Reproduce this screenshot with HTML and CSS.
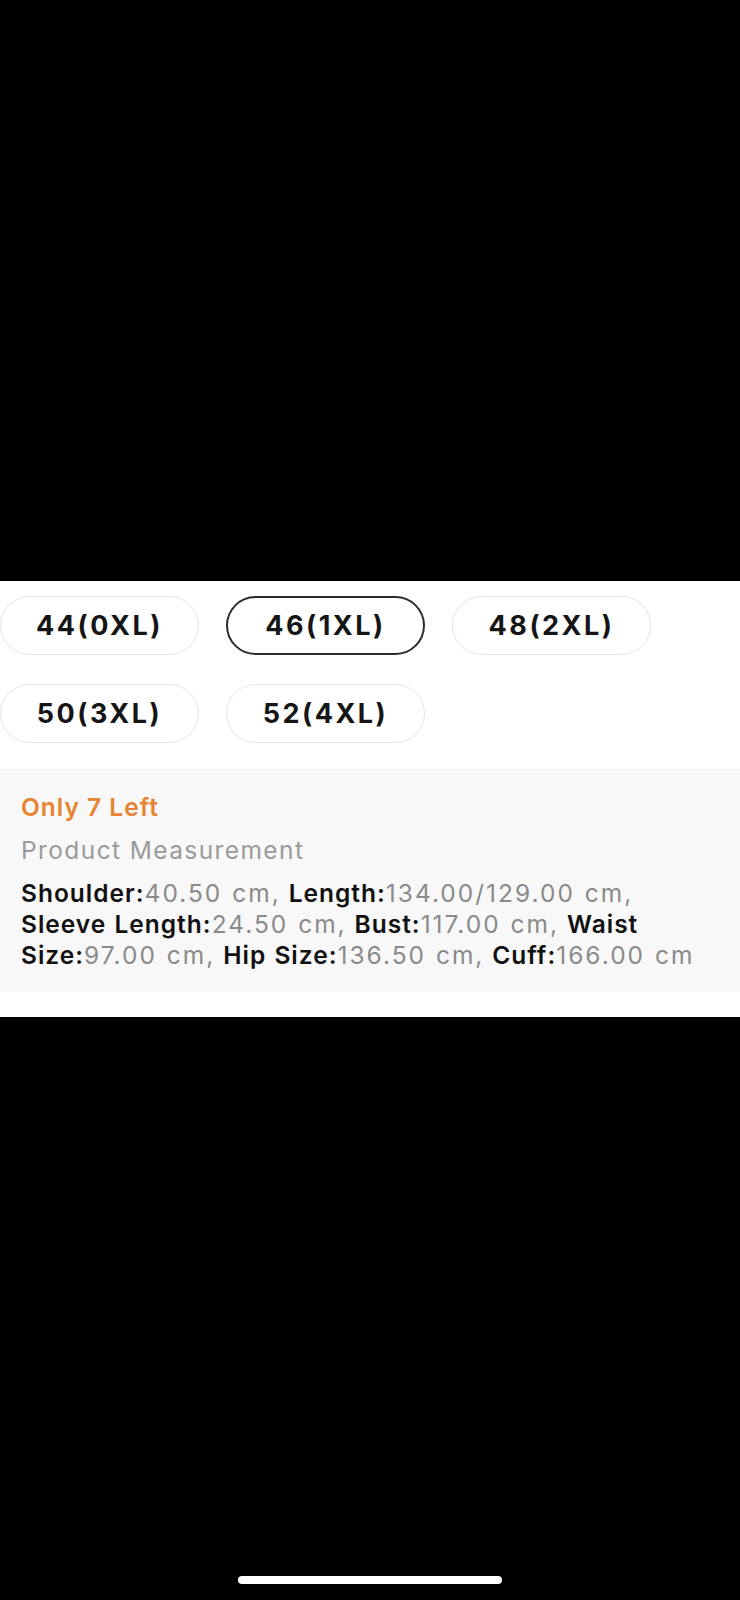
FILE: index.html
```html
<!DOCTYPE html>
<html lang="en">
<head>
<meta charset="utf-8">
<title>Size selection</title>
<link rel="stylesheet" href="styles.css">
</head>
<body>
<div class="screen">
  <div class="black-top"></div>
  <section class="panel">
    <div class="sizes">
      <div class="chip">44(0XL)</div>
      <div class="chip chip-selected">46(1XL)</div>
      <div class="chip">48(2XL)</div>
      <div class="chip">50(3XL)</div>
      <div class="chip">52(4XL)</div>
    </div>
    <div class="info">
      <div class="stock">Only 7 Left</div>
      <div class="title">Product Measurement</div>
      <p class="measure"><b>Shoulder:</b><span>40.50 cm,</span> <b>Length:</b><span>134.00/129.00 cm,</span> <b>Sleeve Length:</b><span>24.50 cm,</span> <b>Bust:</b><span>117.00 cm,</span> <b>Waist</b> <b>Size:</b><span>97.00 cm,</span> <b>Hip Size:</b><span>136.50 cm,</span> <b>Cuff:</b><span>166.00 cm</span></p>
    </div>
  </section>
  <div class="black-bottom">
    <div class="home-bar"></div>
  </div>
</div>
</body>
</html>
```
FILE: styles.css
```css
html, body {
  margin: 0;
  padding: 0;
  background: #000;
}
body {
  font-family: Inter, "Liberation Sans", Arial, sans-serif;
}
.screen {
  width: 740px;
  height: 1600px;
  display: flex;
  flex-direction: column;
  background: #000;
}
.black-top {
  height: 581px;
  flex: none;
}
.panel {
  background: #fff;
  flex: none;
  height: 436px;
  padding-top: 15px;
  box-sizing: border-box;
}
.sizes {
  display: grid;
  grid-template-columns: repeat(3, 199px);
  column-gap: 27px;
  row-gap: 29px;
}
.chip {
  height: 59px;
  box-sizing: border-box;
  border: 1.5px solid #e4e4e4;
  border-radius: 30px;
  display: flex;
  align-items: center;
  justify-content: center;
  font-size: 27px;
  font-weight: 700;
  letter-spacing: 2.5px;
  color: #151515;
}
.chip-selected {
  border: 2px solid #2b2b2b;
}
.info {
  margin-top: 26px;
  background: #f8f8f8;
  padding: 23px 20px 21px 21px;
}
.stock {
  font-size: 24.5px;
  line-height: 31px;
  font-weight: 600;
  color: #e8832f;
  letter-spacing: 1px;
}
.title {
  margin-top: 12px;
  font-size: 24.5px;
  line-height: 31px;
  color: #9a9a9a;
  letter-spacing: 1.4px;
}
.measure {
  margin: 12px 0 0 0;
  font-size: 24.5px;
  line-height: 31px;
  word-spacing: 1px;
}
.measure b {
  font-weight: 600;
  color: #111;
  letter-spacing: 1px;
}
.measure span {
  color: #8a8a8a;
  letter-spacing: 2px;
}
.black-bottom {
  flex: 1;
  display: flex;
  justify-content: center;
  align-items: flex-end;
  padding-bottom: 16px;
}
.home-bar {
  width: 264px;
  height: 8px;
  border-radius: 4px;
  background: #fff;
}
```
